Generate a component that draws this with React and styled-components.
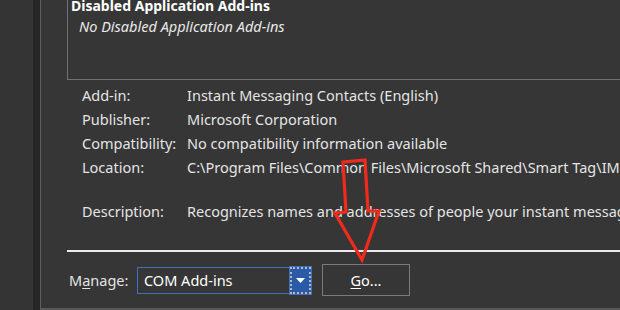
import React from 'react';
import styled, {createGlobalStyle} from 'styled-components';

const GlobalStyle = createGlobalStyle`
  html, body {
    margin: 0;
    padding: 0;
    background: #363636;
    overflow: hidden;
  }
  * {
    box-sizing: border-box;
  }
`;

const Window = styled.div`
  position: relative;
  width: 620px;
  height: 310px;
  display: flex;
  font-family: 'Noto Sans', 'Liberation Sans', sans-serif;
  font-size: 14.5px;
  color: #e4e4e4;
  overflow: hidden;
`;

const Gutter = styled.div`
  flex: 0 0 33px;
  background: #343434;
`;

const Splitter = styled.div`
  flex: 0 0 8px;
  background: #262626;
  border-right: 1px solid #5e5e5e;
`;

const Content = styled.div`
  flex: 1;
  min-width: 0;
  display: flex;
  flex-direction: column;
  padding-left: 26px;
  background: #363636;
  border-bottom: 2px solid #595959;
`;

const GroupBox = styled.div`
  flex: 0 0 80px;
  border-left: 1px solid #707070;
  border-bottom: 1px solid #707070;
  padding-left: 3px;
`;

const GroupTitle = styled.div`
  margin-top: -4px;
  font-weight: 700;
  font-size: 14px;
  line-height: 20px;
  color: #ffffff;
`;

const EmptyNote = styled.div`
  margin-top: 1px;
  padding-left: 8px;
  font-style: italic;
  line-height: 18px;
  color: #e8e8e8;
`;

const Details = styled.div`
  display: flex;
  flex-direction: column;
  padding: 3px 0 0 15px;
  white-space: nowrap;
`;

const DetailRow = styled.div`
  display: grid;
  grid-template-columns: 105px 1fr;
  height: 24px;
  line-height: 24px;
  margin-top: ${p => p.$gap || 0}px;
`;

const Separator = styled.div`
  flex: 0 0 2px;
  margin-top: 27px;
  background: #ececec;
`;

const ManageRow = styled.div`
  display: flex;
  align-items: center;
  margin-top: 12px;
  padding-left: 2px;
`;

const ManageLabel = styled.span`
  width: 68px;
  color: #e4e4e4;
`;

const Accel = styled.span`
  text-decoration: underline;
  text-underline-offset: 2px;
`;

const Combo = styled.div`
  display: flex;
  height: 27px;
  width: 174px;
  border: 1px solid #3f6fbf;
`;

const ComboText = styled.div`
  flex: 1;
  padding-left: 6px;
  line-height: 25px;
  color: #ffffff;
`;

const ComboButton = styled.div`
  width: 21px;
  margin: -1px -1px -1px 0;
  background: #2b5aa6;
  border: 2px dotted #b8b8b8;
  outline: 1px solid #3f6fbf;
  display: flex;
  align-items: center;
  justify-content: center;
`;

const GoButton = styled.div`
  margin-left: 11px;
  width: 88px;
  height: 32px;
  border: 1px solid #7a7a7a;
  display: flex;
  align-items: center;
  justify-content: center;
  color: #ffffff;
`;

const Annotation = styled.svg`
  position: absolute;
  left: 0;
  top: 0;
  pointer-events: none;
`;

const rows = [
  ['Add-in:', 'Instant Messaging Contacts (English)'],
  ['Publisher:', 'Microsoft Corporation'],
  ['Compatibility:', 'No compatibility information available'],
  ['Location:', 'C:\\Program Files\\Common Files\\Microsoft Shared\\Smart Tag\\IMCONTACT.DLL'],
];

export default function App() {
  return (
    <>
      <GlobalStyle />
      <Window>
        <Gutter />
        <Splitter />
        <Content>
          <GroupBox>
            <GroupTitle>Disabled Application Add-ins</GroupTitle>
            <EmptyNote>No Disabled Application Add-ins</EmptyNote>
          </GroupBox>
          <Details>
            {rows.map(([label, value]) => (
              <DetailRow key={label}>
                <span>{label}</span>
                <span>{value}</span>
              </DetailRow>
            ))}
            <DetailRow $gap={20}>
              <span>Description:</span>
              <span>Recognizes names and addresses of people your instant messaging contacts</span>
            </DetailRow>
          </Details>
          <Separator />
          <ManageRow>
            <ManageLabel>M<Accel>a</Accel>nage:</ManageLabel>
            <Combo>
              <ComboText>COM Add-ins</ComboText>
              <ComboButton>
                <svg width="9" height="5" viewBox="0 0 9 5">
                  <path d="M0 0 H9 L4.5 5 Z" fill="#ffffff" />
                </svg>
              </ComboButton>
            </Combo>
            <GoButton><Accel>G</Accel>o...</GoButton>
          </ManageRow>
        </Content>
        <Annotation width="620" height="310" viewBox="0 0 620 310">
          <path
            d="M343 162 L365 160 L368 211 L379 211 L362 260 L335 213 L346 212 Z"
            fill="none"
            stroke="#f22a1c"
            strokeWidth="3.2"
            strokeLinejoin="miter"
          />
        </Annotation>
      </Window>
    </>
  );
}
